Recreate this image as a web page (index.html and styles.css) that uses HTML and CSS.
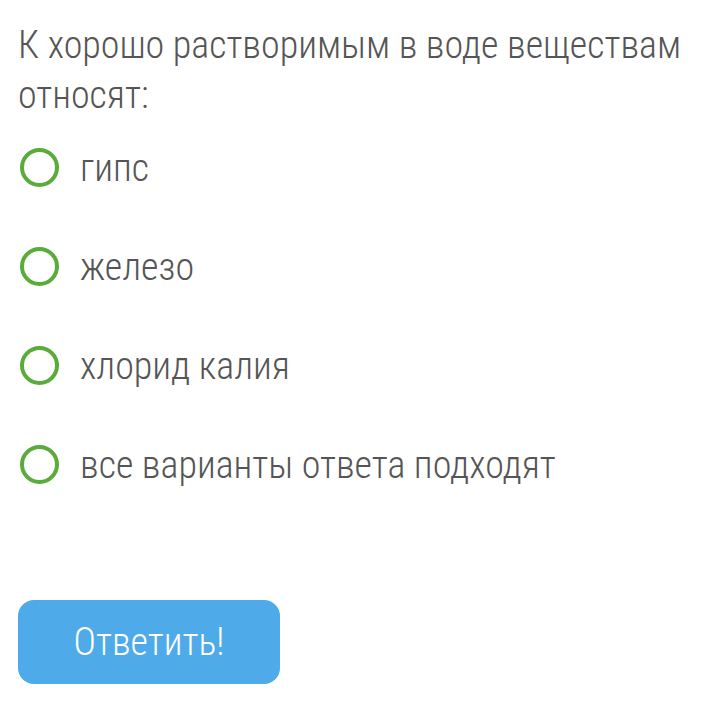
FILE: index.html
```html
<!DOCTYPE html>
<html lang="ru">
<head>
    <meta charset="UTF-8">
    <title>Вопрос</title>
    <link rel="stylesheet" href="styles.css">
</head>
<body>
    <div class="quiz">
        <p class="question">К хорошо растворимым в воде веществам относят:</p>

        <ul class="answers">
            <li class="answer"><span class="radio"></span>гипс</li>
            <li class="answer"><span class="radio"></span>железо</li>
            <li class="answer"><span class="radio"></span>хлорид калия</li>
            <li class="answer"><span class="radio"></span>все варианты ответа подходят</li>
        </ul>

        <button class="submit-btn">Ответить!</button>
    </div>
</body>
</html>
```

FILE: styles.css
```css
body {
    margin: 0;
    background-color: #fff;
    font-family: Roboto, "Liberation Sans", sans-serif;
    font-weight: 300;
    font-stretch: condensed;
    color: #555;
}

.quiz {
    padding: 20px 18px;
}

.question {
    margin: 0;
    font-size: 38px;
    line-height: 50px;
    color: #555;
}

.answers {
    list-style: none;
    margin: -2px 0 0;
    padding: 0;
}

.answer {
    display: flex;
    align-items: center;
    height: 99px;
    font-size: 38px;
    color: #555;
}

.radio {
    width: 31px;
    height: 31px;
    border: 4px solid #5aac3a;
    border-radius: 50%;
    margin: 0 21px 0 2px;
}

.submit-btn {
    margin-top: 86px;
    width: 262px;
    height: 84px;
    border: none;
    border-radius: 16px;
    background-color: #4eaae8;
    color: #fff;
    font-family: inherit;
    font-weight: 300;
    font-stretch: inherit;
    font-size: 38px;
}
```
